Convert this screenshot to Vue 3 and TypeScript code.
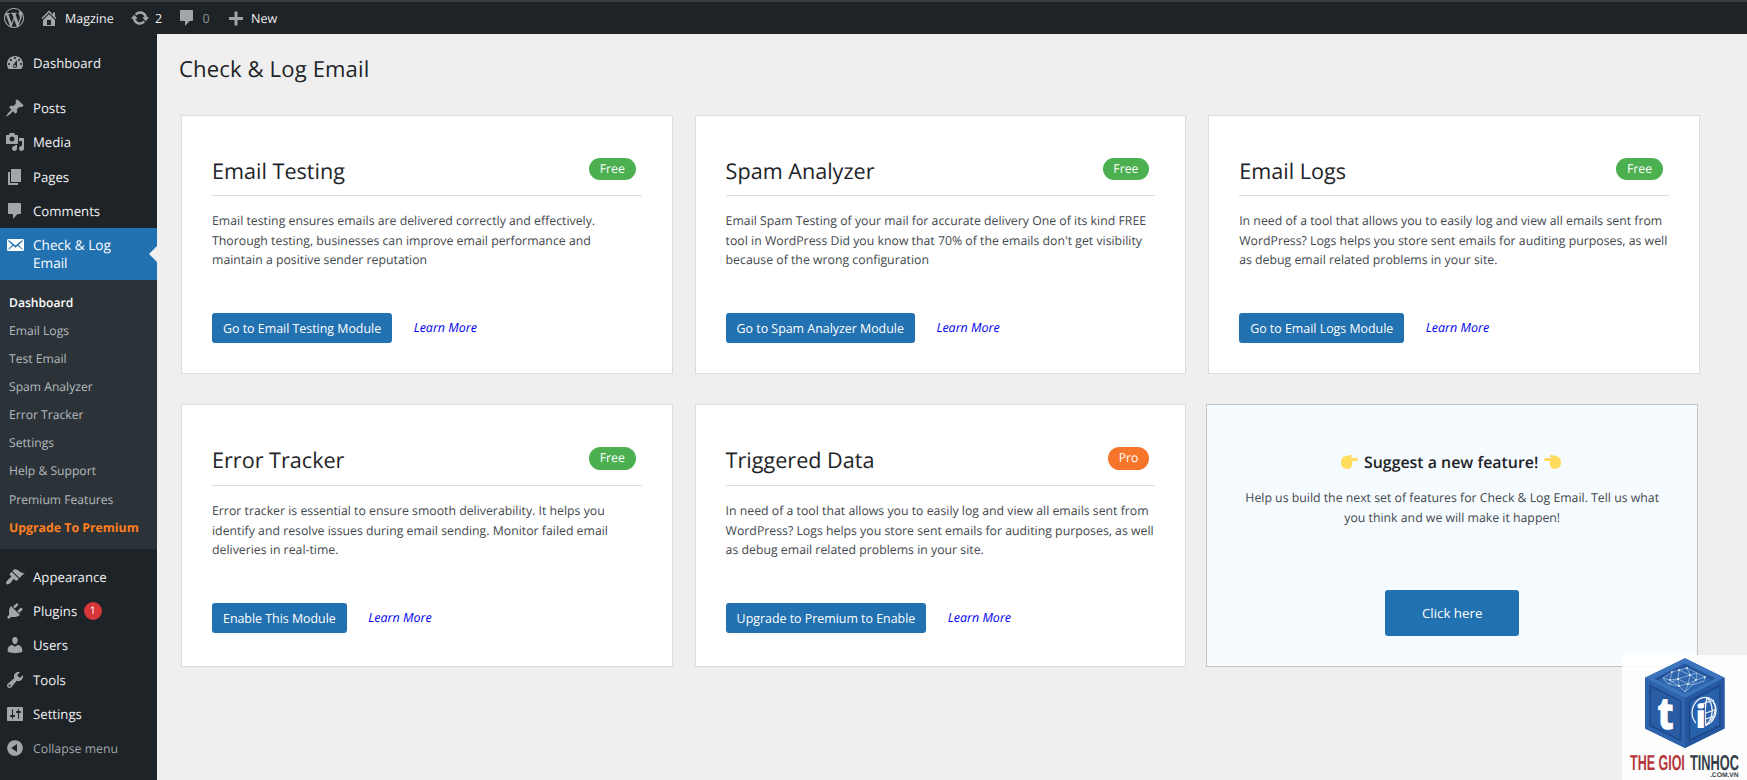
<script setup lang="ts">
interface MenuItem {
  label: string
  icon: string
}

interface Module {
  title: string
  badge: 'Free' | 'Pro'
  lines: string[]
  action: string
}

const icons: Record<string, string> = {
  wordpress:
    'M20 10c0-5.51-4.49-10-10-10C4.48 0 0 4.49 0 10c0 5.52 4.48 10 10 10 5.51 0 10-4.48 10-10zM7.78 15.37L4.37 6.22c.55-.02 1.17-.08 1.17-.08.5-.06.44-1.13-.06-1.11 0 0-1.45.11-2.37.11-.18 0-.37 0-.58-.01C4.12 2.69 6.87 1.11 10 1.11c2.33 0 4.45.87 6.05 2.34-.68-.11-1.65.39-1.65 1.58 0 .74.45 1.36.9 2.1.35.61.55 1.36.55 2.46 0 1.49-1.4 5-1.4 5l-3.03-8.37c.54-.02.82-.17.82-.17.5-.05.44-1.25-.06-1.22 0 0-1.44.12-2.38.12-.87 0-2.33-.12-2.33-.12-.5-.03-.56 1.2-.06 1.22l.92.08 1.26 3.41zM17.41 10c.24-.64.74-1.87.43-4.25.7 1.29 1.05 2.71 1.05 4.25 0 3.29-1.73 6.24-4.4 7.78.97-2.59 1.94-5.2 2.92-7.78zM6.1 18.09C3.12 16.65 1.11 13.53 1.11 10c0-1.3.23-2.48.72-3.59C3.25 10.3 4.67 14.2 6.1 18.09zm4.03-6.63l2.58 6.98c-.86.29-1.76.45-2.71.45-.79 0-1.57-.11-2.29-.33.81-2.38 1.62-4.74 2.42-7.1z',
  home: 'M16 8.5l1.53 1.53-1.06 1.06L10 4.6l-6.47 6.49-1.06-1.06L10 2.5l4 4v-2h2v4zm-6-2.46l6 5.99V18H4v-5.97zM12 17v-5H8v5h4z',
  update:
    'M10.2 3.28c3.53 0 6.43 2.61 6.92 6h2.08l-3.5 4-3.5-4h2.32c-.45-1.97-2.21-3.45-4.32-3.45-1.45 0-2.73.71-3.54 1.78L4.95 5.66C6.23 4.2 8.11 3.28 10.2 3.28zm-.4 13.44c-3.52 0-6.43-2.61-6.92-6H.8l3.5-4c1.17 1.33 2.33 2.67 3.5 4H5.48c.45 1.97 2.21 3.45 4.32 3.45 1.45 0 2.73-.71 3.54-1.78l1.71 1.95c-1.28 1.46-3.15 2.38-5.25 2.38z',
  comments: 'M4 2h11c.55 0 1 .45 1 1v9c0 .55-.45 1-1 1h-2.5L8 18v-5H4c-.55 0-1-.45-1-1V3c0-.55.45-1 1-1z',
  plus: 'M17 9v3h-5.5v5.5h-3V12H3V9h5.5V3.500h3V9z',
  dashboard:
    'M3.76 16h12.48c1.1-1.37 1.76-3.11 1.76-5 0-4.42-3.58-8-8-8s-8 3.58-8 8c0 1.89.66 3.63 1.76 5zM10 4c.55 0 1 .45 1 1s-.45 1-1 1-1-.45-1-1 .45-1 1-1zM6 6c.55 0 1 .45 1 1s-.45 1-1 1-1-.45-1-1 .45-1 1-1zm8 0c.55 0 1 .45 1 1s-.45 1-1 1-1-.45-1-1 .45-1 1-1zm-5.37 5.55L12 7v6c0 1.1-.9 2-2 2s-2-.9-2-2c0-.57.24-1.08.63-1.45zM4 10c.55 0 1 .45 1 1s-.45 1-1 1-1-.45-1-1 .45-1 1-1zm12 0c.55 0 1 .45 1 1s-.45 1-1 1-1-.45-1-1 .45-1 1-1zm-5 3c0-.55-.45-1-1-1s-1 .45-1 1 .45 1 1 1 1-.45 1-1z',
  post: 'M10.44 3.02l1.82-1.82 6.36 6.35-1.83 1.82c-1.05-.68-2.48-.57-3.41.36l-.75.75c-.92.93-1.04 2.35-.35 3.41l-1.83 1.82-2.41-2.41-2.8 2.79c-.42.42-3.38 2.71-3.8 2.29s1.86-3.39 2.28-3.81l2.79-2.79L4.1 9.36l1.83-1.82c1.05.69 2.48.57 3.4-.36l.75-.75c.93-.92 1.05-2.35.36-3.41z',
  media:
    'M13 11V4c0-.55-.45-1-1-1h-1.67L9 1H5L3.67 3H2c-.55 0-1 .45-1 1v7c0 .55.45 1 1 1h10c.55 0 1-.45 1-1zM7 4.5c1.38 0 2.5 1.12 2.5 2.5S8.38 9.5 7 9.5 4.5 8.38 4.5 7 5.62 4.5 7 4.5zM14 6h5v10.5c0 1.38-1.12 2.5-2.5 2.5S14 17.88 14 16.5s1.12-2.5 2.5-2.5c.17 0 .34.02.5.05V9h-3V6zm-4 8.05V13h2v3.5c0 1.38-1.12 2.5-2.5 2.5S7 17.88 7 16.5 8.12 14 9.500 14c.17 0 .34.02.5.05z',
  page: 'M6 15V2h10v13H6zm-1 1h8v2H3V5h2v11z',
  email:
    'M19 14.5v-9c0-.83-.67-1.5-1.5-1.5H3.49c-.83 0-1.5.67-1.5 1.5v9c0 .83.67 1.5 1.5 1.5H17.5c.83 0 1.5-.67 1.5-1.5zm-1.31-9.11c.33.33.15.67-.03.84L13.6 9.95l3.9 4.06c.12.14.2.36.06.51-.13.16-.43.15-.56.05l-4.37-3.73-2.14 1.95-2.13-1.95-4.37 3.73c-.13.1-.43.11-.56-.05-.14-.15-.06-.37.06-.51l3.9-4.06-4.06-3.72c-.18-.17-.36-.51-.03-.84s.67-.17.95.07l6.24 5.04 6.25-5.04c.28-.24.62-.4.95-.07z',
  appearance:
    'M14.48 11.06L7.41 3.99l1.5-1.5c.5-.56 2.3-.47 3.51.32 1.21.8 1.43 1.28 2.91 2.1 1.18.64 2.45 1.26 4.45.85zm-.71.71L6.7 4.7 4.93 6.47c-.39.39-.39 1.02 0 1.41l1.06 1.06c.39.39.39 1.03 0 1.42-.6.6-1.43 1.11-2.21 1.69-.35.26-.7.53-1.01.84C1.43 14.23.4 16.08 1.4 17.07c.99 1 2.84-.03 4.18-1.36.31-.31.58-.66.85-1.02.57-.78 1.08-1.61 1.69-2.21.39-.39 1.02-.39 1.41 0l1.06 1.06c.39.39 1.02.39 1.41 0z',
  plugins:
    'M13.11 4.36L9.87 7.6 8 5.73l3.24-3.24c.35-.34 1.05-.2 1.56.32.52.51.66 1.21.31 1.55zm-8 1.77l.91-1.12 9.01 9.01-1.19.84c-.71.71-2.63 1.16-3.82 1.16H6.14L4.9 17.26c-.59.59-1.54.59-2.12 0-.59-.58-.59-1.53 0-2.12l1.24-1.24v-3.88c0-1.13.4-3.19 1.09-3.89zm7.26 3.97l3.24-3.24c.34-.35 1.04-.21 1.55.31.52.51.66 1.21.31 1.55l-3.24 3.25z',
  users:
    'M10 9.25c-2.27 0-2.73-3.44-2.73-3.44C7 4.02 7.82 2 9.97 2c2.16 0 2.98 2.02 2.71 3.81 0 0-.41 3.44-2.68 3.44zm0 2.57L12.72 10c2.39 0 4.52 2.33 4.52 4.53v2.49s-3.65 1.13-7.24 1.13c-3.65 0-7.24-1.13-7.24-1.13v-2.49c0-2.25 1.94-4.48 4.47-4.48z',
  tools:
    'M16.68 9.77c-1.34 1.34-3.3 1.67-4.95.99l-5.41 6.52c-.99.99-2.59.99-3.58 0s-.99-2.59 0-3.57l6.52-5.42c-.68-1.65-.35-3.61.99-4.95 1.28-1.28 3.12-1.62 4.72-1.06l-2.89 2.89 2.82 2.82 2.86-2.87c.53 1.58.18 3.39-1.08 4.65zM3.81 16.21c.4.39 1.04.39 1.43 0 .4-.4.4-1.04 0-1.43-.39-.4-1.03-.4-1.43 0-.39.39-.39 1.03 0 1.43z',
  settings:
    'M18 16V4c0-.55-.45-1-1-1H3c-.55 0-1 .45-1 1v12c0 .55.45 1 1 1h14c.55 0 1-.45 1-1zM8 11h1c.55 0 1 .45 1 1s-.45 1-1 1H8v1.5c0 .28-.22.5-.5.5s-.5-.22-.5-.5V13H6c-.55 0-1-.45-1-1s.45-1 1-1h1V5.5c0-.28.22-.5.5-.5s.5.22.5.5V11zm5-2h-1c-.55 0-1-.45-1-1s.45-1 1-1h1V5.5c0-.28.22-.5.5-.5s.5.22.5.5V7h1c.55 0 1 .45 1 1s-.45 1-1 1h-1v5.5c0 .28-.22.5-.5.5s-.5-.22-.5-.5V9z',
  collapse:
    'M10 2.16c4.33 0 7.84 3.51 7.84 7.84s-3.51 7.84-7.84 7.84S2.16 14.33 2.16 10 5.71 2.16 10 2.16zm2 11.72V6.12L6.18 9.97z',
}

const contentMenu: MenuItem[] = [
  { label: 'Posts', icon: 'post' },
  { label: 'Media', icon: 'media' },
  { label: 'Pages', icon: 'page' },
  { label: 'Comments', icon: 'comments' },
]

const submenu: string[] = [
  'Dashboard',
  'Email Logs',
  'Test Email',
  'Spam Analyzer',
  'Error Tracker',
  'Settings',
  'Help & Support',
  'Premium Features',
  'Upgrade To Premium',
]

const siteMenu: (MenuItem & { count?: number })[] = [
  { label: 'Appearance', icon: 'appearance' },
  { label: 'Plugins', icon: 'plugins', count: 1 },
  { label: 'Users', icon: 'users' },
  { label: 'Tools', icon: 'tools' },
  { label: 'Settings', icon: 'settings' },
]

const logText: string[] = [
  'In need of a tool that allows you to easily log and view all emails sent from',
  'WordPress? Logs helps you store sent emails for auditing purposes, as well',
  'as debug email related problems in your site.',
]

const modules: Module[] = [
  {
    title: 'Email Testing',
    badge: 'Free',
    lines: [
      'Email testing ensures emails are delivered correctly and effectively.',
      'Thorough testing, businesses can improve email performance and',
      'maintain a positive sender reputation',
    ],
    action: 'Go to Email Testing Module',
  },
  {
    title: 'Spam Analyzer',
    badge: 'Free',
    lines: [
      'Email Spam Testing of your mail for accurate delivery One of its kind FREE',
      "tool in WordPress Did you know that 70% of the emails don't get visibility",
      'because of the wrong configuration',
    ],
    action: 'Go to Spam Analyzer Module',
  },
  { title: 'Email Logs', badge: 'Free', lines: logText, action: 'Go to Email Logs Module' },
  {
    title: 'Error Tracker',
    badge: 'Free',
    lines: [
      'Error tracker is essential to ensure smooth deliverability. It helps you',
      'identify and resolve issues during email sending. Monitor failed email',
      'deliveries in real-time.',
    ],
    action: 'Enable This Module',
  },
  { title: 'Triggered Data', badge: 'Pro', lines: logText, action: 'Upgrade to Premium to Enable' },
]
</script>

<template>
  <div class="page">
    <header class="adminbar">
      <span class="bar-item wp"><svg class="icon" viewBox="0 0 20 20"><path :d="icons.wordpress" /></svg></span>
      <span class="bar-item site"><svg class="icon" viewBox="0 0 20 20"><path :d="icons.home" /></svg><span>Magzine</span></span>
      <span class="bar-item updates"><svg class="icon" viewBox="0 0 20 20"><path :d="icons.update" /></svg><span>2</span></span>
      <span class="bar-item replies"><svg class="icon" viewBox="0 0 20 20"><path :d="icons.comments" /></svg><span>0</span></span>
      <span class="bar-item new"><svg class="icon" viewBox="0 0 20 20"><path :d="icons.plus" /></svg><span>New</span></span>
    </header>

    <div class="body">
      <nav class="sidebar">
        <a class="item first"><svg class="icon" viewBox="0 0 20 20"><path :d="icons.dashboard" /></svg><span>Dashboard</span></a>
        <a v-for="m in contentMenu" :key="m.label" class="item">
          <svg class="icon" viewBox="0 0 20 20"><path :d="icons[m.icon]" /></svg><span>{{ m.label }}</span>
        </a>
        <a class="item current">
          <svg class="icon" viewBox="0 0 20 20"><path :d="icons.email" /></svg><span>Check &amp; Log<br />Email</span>
        </a>
        <div class="submenu">
          <a v-for="s in submenu" :key="s">{{ s }}</a>
        </div>
        <a v-for="m in siteMenu" :key="m.label" class="item">
          <svg class="icon" viewBox="0 0 20 20"><path :d="icons[m.icon]" /></svg><span>{{ m.label }}</span>
          <b v-if="m.count" class="count">{{ m.count }}</b>
        </a>
        <a class="item collapse"><svg class="icon" viewBox="0 0 20 20"><path :d="icons.collapse" /></svg><span>Collapse menu</span></a>
      </nav>

      <main class="content">
        <h1>Check &amp; Log Email</h1>
        <div class="grid">
          <section v-for="m in modules" :key="m.title" class="card">
            <div class="card-head">
              <h2>{{ m.title }}</h2>
              <span class="badge" :class="{ pro: m.badge === 'Pro' }">{{ m.badge }}</span>
            </div>
            <p class="desc"><span v-for="l in m.lines" :key="l">{{ l }}</span></p>
            <div class="actions">
              <button type="button">{{ m.action }}</button>
              <a>Learn More</a>
            </div>
          </section>

          <section class="card suggest">
            <h3>
              <svg class="hand" viewBox="0 0 17 14">
                <path d="M0 7.200C0 3 3 .9 6.400.7L10 .1c1.500-.2 1.700 1.500.5 1.900L8.500 3.100H15.600c1.800 0 1.800 2.800 0 2.800H10.800c.8.500.8 1.700.2 2.200.5.600.4 1.700-.3 2.100.3.900-.1 1.700-.8 1.900.1 1-.6 1.700-1.600 1.700H5.300C2 13.800 0 11 0 7.200z" />
              </svg>
              <span>Suggest a new feature!</span>
              <svg class="hand flip" viewBox="0 0 17 14">
                <path d="M0 7.200C0 3 3 .9 6.400.7L10 .1c1.500-.2 1.700 1.500.5 1.900L8.500 3.100H15.600c1.800 0 1.800 2.800 0 2.800H10.800c.8.500.8 1.700.2 2.200.5.600.4 1.700-.3 2.100.3.900-.1 1.700-.8 1.900.1 1-.6 1.700-1.600 1.700H5.300C2 13.800 0 11 0 7.200z" />
              </svg>
            </h3>
            <p class="desc">
              <span>Help us build the next set of features for Check &amp; Log Email. Tell us what</span>
              <span>you think and we will make it happen!</span>
            </p>
            <button type="button">Click here</button>
          </section>
        </div>
      </main>
    </div>

    <svg class="watermark" viewBox="0 0 125 125">
      <rect width="125" height="125" fill="#fff" fill-opacity=".88" />
      <!-- cube faces -->
      <path d="M63 3.300 102.500 22.700V73.500L63 93 23 73.500V22.700z" fill="#2b5fa8" />
      <path d="M63 3.300 102.500 22.700 63 43 23 22.700z" fill="#3c74bd" />
      <path d="M63 8.500 93.500 23.500 63 38.500 32.500 23.500z" fill="#24549a" />
      <path d="M63 12.500 90 25 63 38.500 36 25z" fill="#2f66ae" />
      <path d="M23 22.700 63 43V93L23 73.500z" fill="#2d64ad" />
      <path d="M63 43 102.500 22.700V73.500L63 93z" fill="#2558a0" />
      <path d="M28 30.500 58.500 46V85.500L28 70.500z" fill="#2a5ca3" stroke="#1d4a8d" stroke-width="1.500" />
      <path d="M67.500 46 98 30.500V70.500L67.500 85.500z" fill="#2960ac" stroke="#1b4788" stroke-width="1.500" />
      <!-- network on the lid -->
      <g fill="none" stroke="#c9e2f2" stroke-width=".55">
        <path d="M41 23 50 17 57 15 65 13 75 18 83 22 82 26 70 30 63 37 57 31 46 29zM50 17 48 25 56 24 57 15 68 20 65 13M56 24 68 20 75 18 74 25 83 22M48 25 57 31 56 24 66 29 68 20 74 25 66 29 63 37M41 23 48 25M46 29 56 24M57 31 66 29 70 30 74 25" />
      </g>
      <g fill="#eaf6fc">
        <circle v-for="[x, y] in [[50, 17], [57, 15], [65, 13], [56, 24], [68, 20], [74, 25], [66, 29], [57, 31], [48, 25], [83, 22]]" :key="`${x}-${y}`" :cx="x" :cy="y" r=".9" />
      </g>
      <!-- letter marks on the side faces -->
      <text x="35" y="73" class="mark" textLength="17" lengthAdjust="spacingAndGlyphs" transform="skewY(4) translate(0 -2)">t</text>
      <g fill="none" stroke="#eef4fa" stroke-width="1.300">
        <ellipse cx="82" cy="56.500" rx="11.800" ry="14.200" transform="rotate(14 82 56.500)" />
        <path d="M85 42.500c7 7 7 20-1 28M85 42.500c-2 8-2 20-1 28M77 50 92 45M84 58 94 54.500M84 64 92 61M91 46c4 6 2 14-2 20" />
      </g>
      <path d="M74 50h9v21h-9z" fill="#2960ac" />
      <text x="73.500" y="73" class="mark small" textLength="10.500" lengthAdjust="spacingAndGlyphs">i</text>
      <text class="name red" transform="translate(8 114.800) scale(.581 1)">THE GIOI</text>
      <text class="name" transform="translate(68 114.800) scale(.595 1)">TINHOC</text>
      <text x="88" y="122.300" class="tld">.COM.VN</text>
    </svg>
  </div>
</template>

<style>
body {
  margin: 0;
  background: #efefef;
  overflow: hidden;
}
</style>

<style scoped>
.page {
  position: relative;
  width: 1747px;
  height: 780px;
  overflow: hidden;
  display: flex;
  flex-direction: column;
  background: #efefef;
  font-family: "Open Sans", "Noto Sans", sans-serif;
  text-rendering: geometricPrecision;
  white-space: nowrap;
}
.icon {
  width: 20px;
  height: 20px;
  flex: none;
  fill: #a1a6ab;
}
.adminbar {
  box-sizing: border-box;
  height: 34px;
  flex: none;
  display: flex;
  align-items: center;
  border-top: 2px solid #3c3d3f;
  background: #1d2327;
  color: #f0f0f1;
  font-size: 12.500px;
  padding-left: 4px;
}
.bar-item {
  display: flex;
  align-items: center;
}
.wp { width: 35px; }
.site { width: 90.500px; gap: 6px; }
.updates { width: 47.500px; gap: 5.500px; }
.replies { width: 49px; gap: 5.500px; }
.replies span { color: #8f9194; }
.new { gap: 5px; }
.body {
  flex: 1;
  display: flex;
  min-height: 0;
}
.sidebar {
  width: 157px;
  flex: none;
  background: #1d2327;
  color: #f0f0f1;
  font-size: 13.200px;
}
.item {
  display: flex;
  align-items: center;
  height: 34.300px;
  padding-left: 5px;
}
.item > span { margin-left: 8px; }
.item.first {
  margin: 12px 0 10.500px;
}
.item.current {
  position: relative;
  align-items: flex-start;
  box-sizing: border-box;
  height: 52px;
  margin-top: .3px;
  padding-top: 8px;
  background: #2271b1;
  color: #fff;
  font-size: 13.600px;
  line-height: 18px;
}
.item.current .icon {
  fill: #fff;
  margin-top: -1px;
}
.item.current::after {
  content: "";
  position: absolute;
  right: 0;
  top: 18px;
  border: 8px solid transparent;
  border-left: 0;
  border-right-color: #efefef;
}
.submenu {
  box-sizing: border-box;
  height: 269px;
  margin-bottom: 10.200px;
  padding: 8.300px 0 0 9px;
  display: flex;
  flex-direction: column;
  background: #2c3338;
  color: #b4b9be;
  font-size: 12.150px;
}
.submenu a {
  height: 28.150px;
  line-height: 28px;
}
.submenu a:first-child {
  color: #fff;
  font-weight: 600;
}
.submenu a:last-child {
  color: #ff8020;
  font-size: 12.300px;
  font-weight: 700;
}
.count {
  width: 18px;
  height: 18px;
  margin-left: 6.500px;
  border-radius: 50%;
  background: #d63638;
  color: #fff;
  font-size: 10.500px;
  font-weight: 400;
  line-height: 18px;
  text-align: center;
}
.collapse {
  color: #a1a6ab;
  font-size: 12.300px;
}
.content {
  padding-left: 24px;
}
h1, h2, h3, p { margin: 0; }
h1 {
  height: 81px;
  margin-left: -2px;
  line-height: 70.500px;
  font-size: 22.100px;
  font-weight: 400;
  letter-spacing: .12px;
  color: #1d2327;
}
.grid {
  display: grid;
  grid-template-columns: repeat(3, 491.600px);
  grid-template-rows: 259px 263px;
  column-gap: 22px;
  row-gap: 30px;
}
.card {
  box-sizing: border-box;
  padding: 0 30px;
  border: 1px solid #dcdcde;
  background: #fff;
  color: #43484d;
}
.card-head {
  box-sizing: border-box;
  height: 80px;
  padding: 32px 6px 0 0;
  display: flex;
  align-items: center;
  justify-content: space-between;
  border-bottom: 1px solid #dcdcde;
}
.card:nth-child(n + 4) .card-head {
  height: 81px;
}
h2 {
  font-size: 21.600px;
  font-weight: 400;
  color: #1d2327;
  line-height: 30px;
}
.badge {
  height: 22px;
  margin-top: -5px;
  padding: 0 10.700px;
  border-radius: 11.500px;
  background: #4caf50;
  color: #fff;
  font-size: 12.300px;
  line-height: 22px;
}
.card:nth-child(n + 4) .badge {
  height: 23px;
}
.badge.pro { background: #f7752b; }
.desc {
  box-sizing: border-box;
  height: 117px;
  padding-top: 15px;
  font-size: 12.300px;
  line-height: 19.500px;
}
.desc span { display: block; }
.actions {
  display: flex;
  align-items: center;
}
button {
  height: 30px;
  padding: 0 11px;
  border: 0;
  border-radius: 3px;
  background: #2271b1;
  color: #fff;
  font: 400 12.400px "Open Sans", "Noto Sans", sans-serif;
}
.actions a {
  margin: -2px 0 0 21.500px;
  color: #0000ee;
  font-size: 12.500px;
  font-style: italic;
}
.suggest {
  width: 492px;
  margin-left: -2px;
  padding: 0;
  display: flex;
  flex-direction: column;
  align-items: center;
  border-color: #c3c4c7;
  background: #f6fbff;
}
h3 {
  display: flex;
  align-items: center;
  gap: 6px;
  padding: 45px 2px 1px 0;
  font-size: 15.900px;
  font-weight: 600;
  line-height: 24px;
  color: #1d2327;
}
.hand {
  width: 17px;
  height: 14px;
  fill: #ffdb5e;
}
.flip { transform: scaleX(-1); }
.suggest .desc {
  height: 115px;
  padding-top: 13px;
  text-align: center;
}
.suggest button {
  width: 134px;
  height: 46px;
  font-size: 13.300px;
}
.watermark {
  position: absolute;
  right: 0;
  bottom: 0;
  width: 125px;
  height: 125px;
}
.mark {
  fill: #fff;
  font: 800 45px "Open Sans", sans-serif;
}
.mark.small { font-size: 32px; }
.name {
  fill: #333f48;
  font: 700 21.500px "Liberation Sans", sans-serif;
}
.name.red { fill: #b5373c; }
.tld {
  fill: #333f48;
  font: 700 6.700px "Liberation Sans", sans-serif;
}
</style>
